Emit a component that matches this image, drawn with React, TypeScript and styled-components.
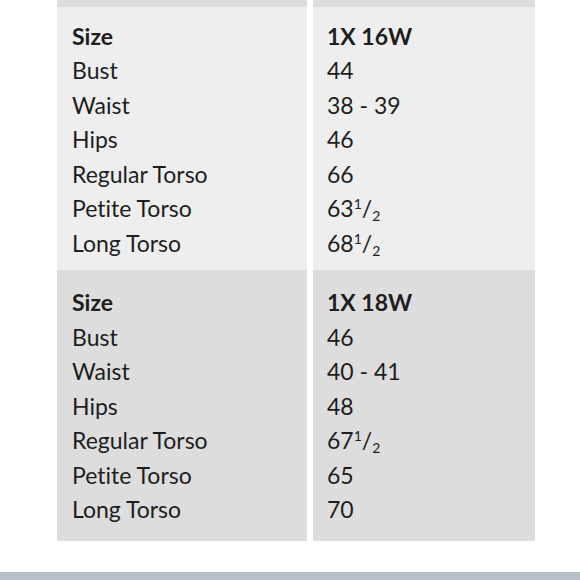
import styled, { createGlobalStyle } from 'styled-components';

const GlobalStyle = createGlobalStyle`
  html, body {
    margin: 0;
    padding: 0;
    background: #ffffff;
  }
`;

const Page = styled.main`
  width: 580px;
  height: 580px;
  background: #ffffff;
  display: flex;
  flex-direction: column;
  overflow: hidden;
  font-family: Lato, 'Open Sans', sans-serif;
  font-variant-ligatures: none;
  color: #1e1e1e;
`;

const Table = styled.div`
  display: grid;
  grid-template-columns: 250px 222px;
  column-gap: 6px;
  margin-left: 57px;
`;

const Cell = styled.div<{ $tone: 'light' | 'dark'; $top: number; $bottom: number; $pad: number }>`
  background: ${(props) => (props.$tone === 'light' ? '#eeeeee' : '#dddddd')};
  padding: ${(props) => `${props.$top}px ${props.$pad}px ${props.$bottom}px`};
  display: flex;
  flex-direction: column;
`;

const Line = styled.div<{ $bold?: boolean }>`
  font-size: 23px;
  line-height: 34.5px;
  font-weight: ${(props) => (props.$bold ? 700 : 400)};
  white-space: nowrap;
`;

const Sup = styled.sup`
  font-size: 14px;
  vertical-align: 8px;
  line-height: 0;
`;

const Sub = styled.sub`
  font-size: 14px;
  vertical-align: -4px;
  line-height: 0;
`;

const Spacer = styled.div`
  flex: 1;
`;

const BottomBar = styled.div`
  height: 8px;
  background: #b9c0c9;
`;

const Half = ({ whole }: { whole: string }) => (
  <>
    {whole}
    <Sup>1</Sup>/<Sub>2</Sub>
  </>
);

const labels = ['Size', 'Bust', 'Waist', 'Hips', 'Regular Torso', 'Petite Torso', 'Long Torso'];

interface ISection {
  tone: 'light' | 'dark';
  top: number;
  bottom: number;
  values: React.ReactNode[];
}

const sections: ISection[] = [
  {
    tone: 'light',
    top: 11.5,
    bottom: 10,
    values: ['1X 16W', '44', '38 - 39', '46', '66', <Half whole="63" />, <Half whole="68" />],
  },
  {
    tone: 'dark',
    top: 15,
    bottom: 14.5,
    values: ['1X 18W', '46', '40 - 41', '48', <Half whole="67" />, '65', '70'],
  },
];

export default function App() {
  return (
    <Page>
      <GlobalStyle />
      <Table>
        <Cell $tone="dark" $top={7} $bottom={0} $pad={15} />
        <Cell $tone="dark" $top={7} $bottom={0} $pad={14} />
        {sections.map((section, i) => (
          <>
            <Cell key={`l${i}`} $tone={section.tone} $top={section.top} $bottom={section.bottom} $pad={15}>
              {labels.map((label, j) => (
                <Line key={label} $bold={j === 0}>
                  {label}
                </Line>
              ))}
            </Cell>
            <Cell key={`r${i}`} $tone={section.tone} $top={section.top} $bottom={section.bottom} $pad={14}>
              {section.values.map((value, j) => (
                <Line key={j} $bold={j === 0}>
                  {value}
                </Line>
              ))}
            </Cell>
          </>
        ))}
      </Table>
      <Spacer />
      <BottomBar />
    </Page>
  );
}
